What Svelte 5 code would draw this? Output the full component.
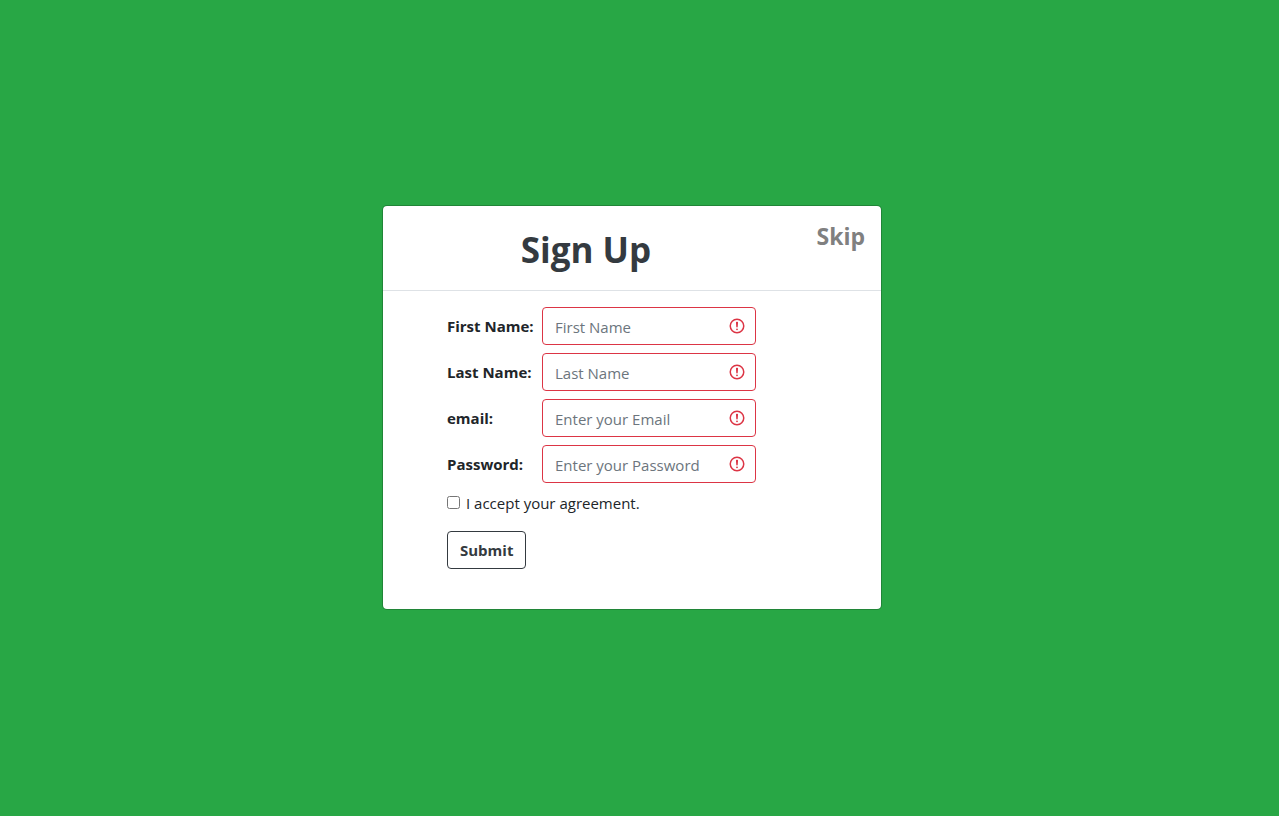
<script>
  const fields = [
    { id: 'first-name', label: 'First Name:', type: 'text', placeholder: 'First Name' },
    { id: 'last-name', label: 'Last Name:', type: 'text', placeholder: 'Last Name' },
    { id: 'email', label: 'email:', type: 'email', placeholder: 'Enter your Email' },
    { id: 'password', label: 'Password:', type: 'password', placeholder: 'Enter your Password' }
  ];
</script>

<main>
  <section class="card">
    <header>
      <h1>Sign Up</h1>
      <a class="skip" href="#skip">Skip</a>
    </header>
    <form novalidate onsubmit={(event) => event.preventDefault()}>
      {#each fields as field}
        <div class="row">
          <label for={field.id}>{field.label}</label>
          <div class="control">
            <input id={field.id} type={field.type} placeholder={field.placeholder} aria-invalid="true" />
            <svg viewBox="0 0 12 12" fill="none" stroke="#dc3545" aria-hidden="true">
              <circle cx="6" cy="6" r="4.5" />
              <path stroke-linejoin="round" d="M5.8 3.6h.4L6 6.5z" />
              <circle cx="6" cy="8.2" r=".6" fill="#dc3545" stroke="none" />
            </svg>
          </div>
        </div>
      {/each}
      <div class="agree">
        <input id="agree" type="checkbox" />
        <label for="agree">I accept your agreement.</label>
      </div>
      <button type="submit">Submit</button>
    </form>
  </section>
</main>

<style>
  :global(body) {
    margin: 0;
    background: #28a745;
  }

  main {
    box-sizing: border-box;
    min-height: 100vh;
    padding: 16px 15px 18px 0;
    display: flex;
    align-items: center;
    justify-content: center;
    background: #28a745;
    color: #212529;
    font-family: 'Segoe UI', 'Open Sans', 'Noto Sans', sans-serif;
    font-size: 15px;
    line-height: 24px;
  }

  .card {
    box-sizing: border-box;
    width: 100%;
    max-width: 500px;
    background: #fff;
    background-clip: padding-box;
    border: 1px solid rgba(0, 0, 0, 0.2);
    border-radius: 5px;
  }

  header {
    display: grid;
    grid-template-columns: 1fr 92px;
    padding: 16px 16px 12px;
    border-bottom: 1px solid #dee2e6;
  }

  h1 {
    margin: 0;
    color: #343a40;
    font-size: 35px;
    font-weight: 700;
    line-height: 56px;
    text-align: center;
  }

  .skip {
    justify-self: end;
    align-self: start;
    color: #808080;
    font-size: 23px;
    font-weight: 700;
    line-height: 28px;
    text-decoration: none;
  }

  form {
    display: flex;
    flex-direction: column;
    align-items: flex-start;
    gap: 8px;
    padding: 16px 64px 40px;
  }

  .row {
    display: grid;
    grid-template-columns: 95px 214px;
    align-items: center;
  }

  .row label {
    font-weight: 700;
  }

  .control {
    position: relative;
  }

  .control input {
    box-sizing: border-box;
    display: block;
    width: 100%;
    height: 38px;
    padding: 7px 36px 5px 12px;
    border: 1px solid #dc3545;
    border-radius: 4px;
    background: #fff;
    color: #495057;
    font: inherit;
  }

  .control input::placeholder {
    color: #6c757d;
    opacity: 1;
  }

  .control svg {
    position: absolute;
    top: 10px;
    right: 10px;
    width: 18px;
    height: 18px;
    pointer-events: none;
  }

  .agree {
    display: flex;
    align-items: center;
    gap: 6px;
    margin-bottom: 8px;
  }

  .agree input {
    width: 13px;
    height: 13px;
    margin: 0;
  }

  button {
    height: 38px;
    padding: 0 12px;
    border: 1px solid #343a40;
    border-radius: 4px;
    background: transparent;
    color: #343a40;
    font: inherit;
    font-weight: 700;
  }
</style>
